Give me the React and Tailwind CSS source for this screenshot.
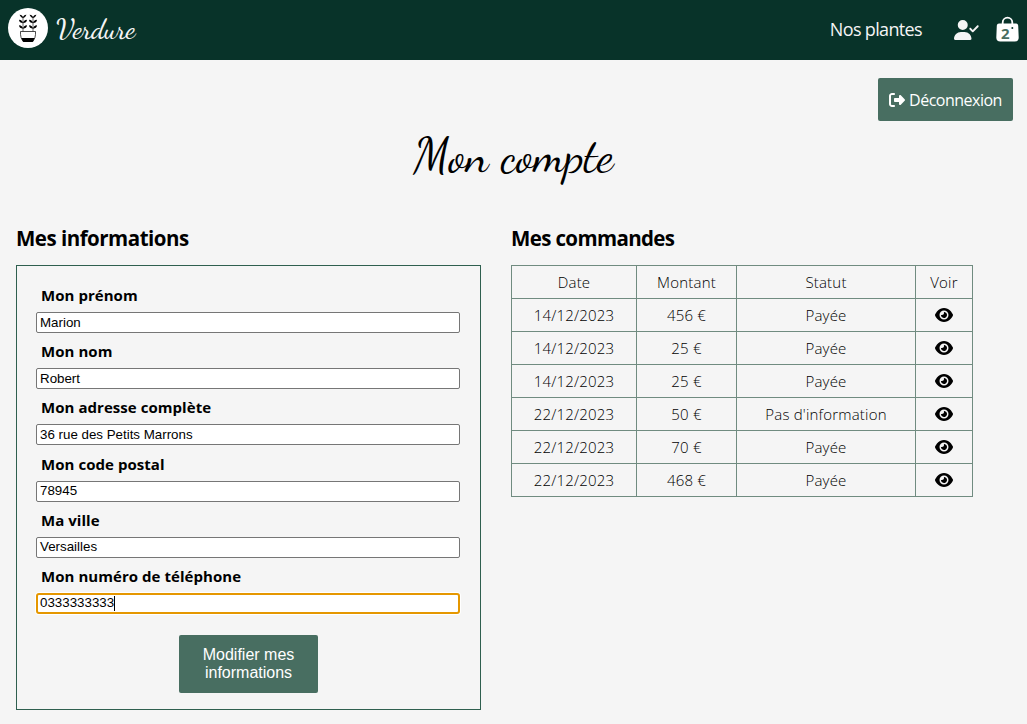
import { FaUserCheck, FaRightFromBracket, FaEye } from "react-icons/fa6";

const fields = [
  { label: "Mon prénom", value: "Marion" },
  { label: "Mon nom", value: "Robert" },
  { label: "Mon adresse complète", value: "36 rue des Petits Marrons" },
  { label: "Mon code postal", value: "78945" },
  { label: "Ma ville", value: "Versailles" },
  { label: "Mon numéro de téléphone", value: "0333333333", focused: true },
];

const orders = [
  ["14/12/2023", "456 €", "Payée"],
  ["14/12/2023", "25 €", "Payée"],
  ["14/12/2023", "25 €", "Payée"],
  ["22/12/2023", "50 €", "Pas d'information"],
  ["22/12/2023", "70 €", "Payée"],
  ["22/12/2023", "468 €", "Payée"],
];

function Stem({ x }) {
  return (
    <g transform={`translate(${x} 0)`}>
      <path d="M0 8.500v15" stroke="black" strokeWidth=".6" />
      <path d="M0 10.200Q-2.500 9.500-3.500 6.800Q0 7 0 10.200Q0 7 3.500 6.800Q2.500 9.500 0 10.200Z" />
      <path d="M0 15.200Q-3.700 15-4 11.800Q-.5 12 0 15.200Q.5 12 4 11.800Q3.700 15 0 15.200Z" />
      <path d="M0 20.700Q-3.700 20.500-4 17.300Q-.5 17.500 0 20.700Q.5 17.500 4 17.300Q3.700 20.500 0 20.700Z" />
    </g>
  );
}

function PlantLogo() {
  return (
    <svg viewBox="0 0 40 40" className="h-10 w-10">
      <circle cx="20" cy="20" r="20" fill="white" />
      <Stem x={15} />
      <Stem x={25} />
      <path d="M12.500 23.500h15v3q0 3-2.500 7h-10q-2.500-4-2.500-7z" fill="white" stroke="black" strokeWidth=".7" />
      <path d="M13.500 30h13q-.5 2-2 4h-9q-1.500-2-2-4z" />
    </svg>
  );
}

function Bag() {
  return (
    <div className="relative mr-[8px] mb-[2px] ml-[17px] h-[26px] w-[23px]">
      <svg viewBox="0 0 23 26" className="h-[26px] w-[23px]">
        <path d="M6.700 9V6.500a4.800 4.800 0 0 1 9.600 0V9" fill="none" stroke="white" strokeWidth="1.800" />
        <path d="M3 7.500h17q2 0 2.200 2l.5 12q0 4-4 4H4.300q-4 0-4-4l.5-12q.2-2 2.200-2z" fill="white" />
        <circle cx="16.300" cy="12" r="1" fill="#083329" />
      </svg>
      <span className="absolute top-[7px] left-[5px] text-[15px] leading-[20px] font-bold text-[#486e61]">2</span>
    </div>
  );
}

export default function App() {
  return (
    <div className="h-[724px] w-[1027px] overflow-hidden bg-[#f5f5f5] font-['Open_Sans','Noto_Sans',sans-serif] text-black">
      <header className="flex h-[60px] items-center bg-[#083329] pl-2 text-[#f5f5f5]">
        <div className="pb-1">
          <PlantLogo />
        </div>
        <span className="ml-2 pb-[2px] font-['Dancing_Script',cursive] text-[28px] leading-none font-medium tracking-[-0.35px]">Verdure</span>
        <span className="ml-auto pb-[2px] text-[18px] tracking-[-0.65px]">Nos plantes</span>
        <FaUserCheck className="ml-8 h-[20px] w-[25px]" />
        <Bag />
      </header>
      <div className="flex h-[61px] justify-end pt-[18px] pr-[14px]">
        <button className="flex h-[43px] w-[135px] items-center justify-center gap-1 rounded-xs bg-[#486e61] text-base tracking-[-0.5px] text-white">
          <FaRightFromBracket className="h-4 w-4" />
          <span>Déconnexion</span>
        </button>
      </div>
      <h1 className="flex h-[104px] items-center justify-center pb-[34px] font-['Dancing_Script',cursive] text-[48px]">Mon compte</h1>
      <main className="flex px-4">
        <section className="w-[465px]">
          <h2 className="h-10 text-[20.5px] leading-[26px] font-bold tracking-[-0.5px]">Mes informations</h2>
          <form className="flex h-[445px] flex-col border border-[#2f5f4f] px-[19px] pt-[17px]">
            {fields.map(({ label, value, focused }) => (
              <label key={label} className="block h-[56.2px] w-[424px]">
                <span className="block h-[29px] pl-[5px] text-[15px] leading-[25px] font-bold tracking-[0.05px]">{label}</span>
                <span
                  className={
                    "flex h-[21px] items-center bg-white font-['Liberation_Sans',sans-serif] text-[13.33px] " +
                    (focused
                      ? "rounded-[3px] border-2 border-[#e59700] pl-[2px] shadow-[0_0_0_1px_white]"
                      : "rounded-xs border border-[#767676] pl-[3px]")
                  }
                >
                  {value}
                  {focused && <span className="h-[15px] w-px bg-black" />}
                </span>
              </label>
            ))}
            <button
              type="button"
              className="mt-[15px] h-[58px] w-[139px] self-center rounded-xs bg-[#486e61] px-4 font-['Liberation_Sans',sans-serif] text-base leading-[18px] text-white"
            >
              Modifier mes informations
            </button>
          </form>
        </section>
        <section className="ml-[30px] w-[462px]">
          <h2 className="h-10 text-[20.5px] leading-[26px] font-bold tracking-[-0.63px]">Mes commandes</h2>
          <table className="w-full table-fixed border-collapse text-center text-[15px] leading-5 font-light tracking-[0.2px]">
            <colgroup>
              <col className="w-[125px]" />
              <col className="w-[100px]" />
              <col className="w-[179px]" />
              <col className="w-[57px]" />
            </colgroup>
            <thead>
              <tr className="h-[33px]">
                {["Date", "Montant", "Statut", "Voir"].map((h) => (
                  <th key={h} className="border border-[#708b80] p-0 font-light">{h}</th>
                ))}
              </tr>
            </thead>
            <tbody>
              {orders.map((order, i) => (
                <tr key={i} className="h-[33px]">
                  {order.map((cell, j) => (
                    <td key={j} className="border border-[#708b80] p-0">{cell}</td>
                  ))}
                  <td className="border border-[#708b80] p-0">
                    <FaEye className="mx-auto h-4 w-[18px]" />
                  </td>
                </tr>
              ))}
            </tbody>
          </table>
        </section>
      </main>
    </div>
  );
}
